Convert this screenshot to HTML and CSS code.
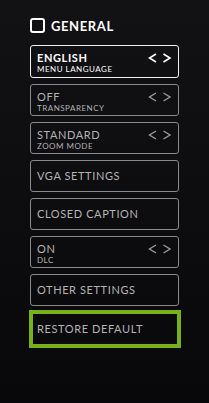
FILE: index.html
```html
<!DOCTYPE html>
<html lang="en">
<head>
  <meta charset="UTF-8" />
  <meta name="viewport" content="width=device-width, initial-scale=1.0"/>
  <title>General Settings</title>
  <link rel="stylesheet" href="styles.css">
</head>
<body>

<div class="panel">
  <div class="title">
    <span class="check"></span>
    <span>GENERAL</span>
  </div>

  <div class="menu">
    <div class="item active">
      <div class="label">
        <div class="value">ENGLISH</div>
        <div class="sub">MENU LANGUAGE</div>
      </div>
      <svg class="arrows" width="24" height="10" viewBox="0 0 24 10"><path d="M8 1 L1.5 5 L8 9 M15.5 1 L22 5 L15.5 9" fill="none" stroke="currentColor" stroke-width="1.6"/></svg>
    </div>

    <div class="item">
      <div class="label">
        <div class="value">OFF</div>
        <div class="sub">TRANSPARENCY</div>
      </div>
      <svg class="arrows" width="24" height="10" viewBox="0 0 24 10"><path d="M8 1 L1.5 5 L8 9 M15.5 1 L22 5 L15.5 9" fill="none" stroke="currentColor" stroke-width="1.4"/></svg>
    </div>

    <div class="item">
      <div class="label">
        <div class="value">STANDARD</div>
        <div class="sub">ZOOM MODE</div>
      </div>
      <svg class="arrows" width="24" height="10" viewBox="0 0 24 10"><path d="M8 1 L1.5 5 L8 9 M15.5 1 L22 5 L15.5 9" fill="none" stroke="currentColor" stroke-width="1.4"/></svg>
    </div>

    <div class="item">
      <div class="value">VGA SETTINGS</div>
    </div>

    <div class="item">
      <div class="value">CLOSED CAPTION</div>
    </div>

    <div class="item">
      <div class="label">
        <div class="value">ON</div>
        <div class="sub">DLC</div>
      </div>
      <svg class="arrows" width="24" height="10" viewBox="0 0 24 10"><path d="M8 1 L1.5 5 L8 9 M15.5 1 L22 5 L15.5 9" fill="none" stroke="currentColor" stroke-width="1.4"/></svg>
    </div>

    <div class="item">
      <div class="value">OTHER SETTINGS</div>
    </div>

    <div class="item selected">
      <div class="value">RESTORE DEFAULT</div>
    </div>
  </div>
</div>

</body>
</html>
```

FILE: styles.css
```css
html, body {
  height: 100%;
}
body {
  font-family: Lato, "Open Sans", sans-serif;
  background: linear-gradient(180deg, #121114 0%, #0d0c0f 50%, #08080a 100%);
  margin: 0;
  padding: 0;
  color: #b4b4b4;
}
.panel {
  padding: 18px 0 0 30px;
}
.title {
  display: flex;
  align-items: center;
  gap: 6px;
  height: 15px;
  color: #fff;
  font-weight: 700;
  font-size: 13px;
  letter-spacing: 0.6px;
}
.check {
  width: 15px;
  height: 15px;
  box-sizing: border-box;
  border: 2px solid #fff;
  border-radius: 3px;
}
.menu {
  display: flex;
  flex-direction: column;
  gap: 6px;
  margin-top: 12px;
  width: 149px;
}
.item {
  box-sizing: border-box;
  height: 32px;
  border: 1.5px solid #8a8a8a;
  border-radius: 3px;
  display: flex;
  align-items: center;
  justify-content: space-between;
  padding: 0 6px 0 6px;
}
.item.active {
  height: 33px;
  border-color: #f2f2f2;
  color: #fff;
}
.value {
  font-size: 11px;
  line-height: 12px;
  letter-spacing: 0.6px;
}
.sub {
  font-size: 8px;
  line-height: 10px;
  letter-spacing: 0.5px;
  margin-top: 0;
}
.label {
  align-self: flex-start;
  padding-top: 6px;
}
.active .value {
  font-weight: 700;
}
.arrows {
  align-self: flex-start;
  margin-top: 7px;
  color: #9a9a9a;
}
.active .arrows {
  color: #fff;
}
.item.selected {
  height: 38px;
  width: 152px;
  margin-left: -1px;
  margin-top: -2px;
  border: 4px solid #78b01c;
  border-radius: 0;
  padding-left: 4px;
}
```
